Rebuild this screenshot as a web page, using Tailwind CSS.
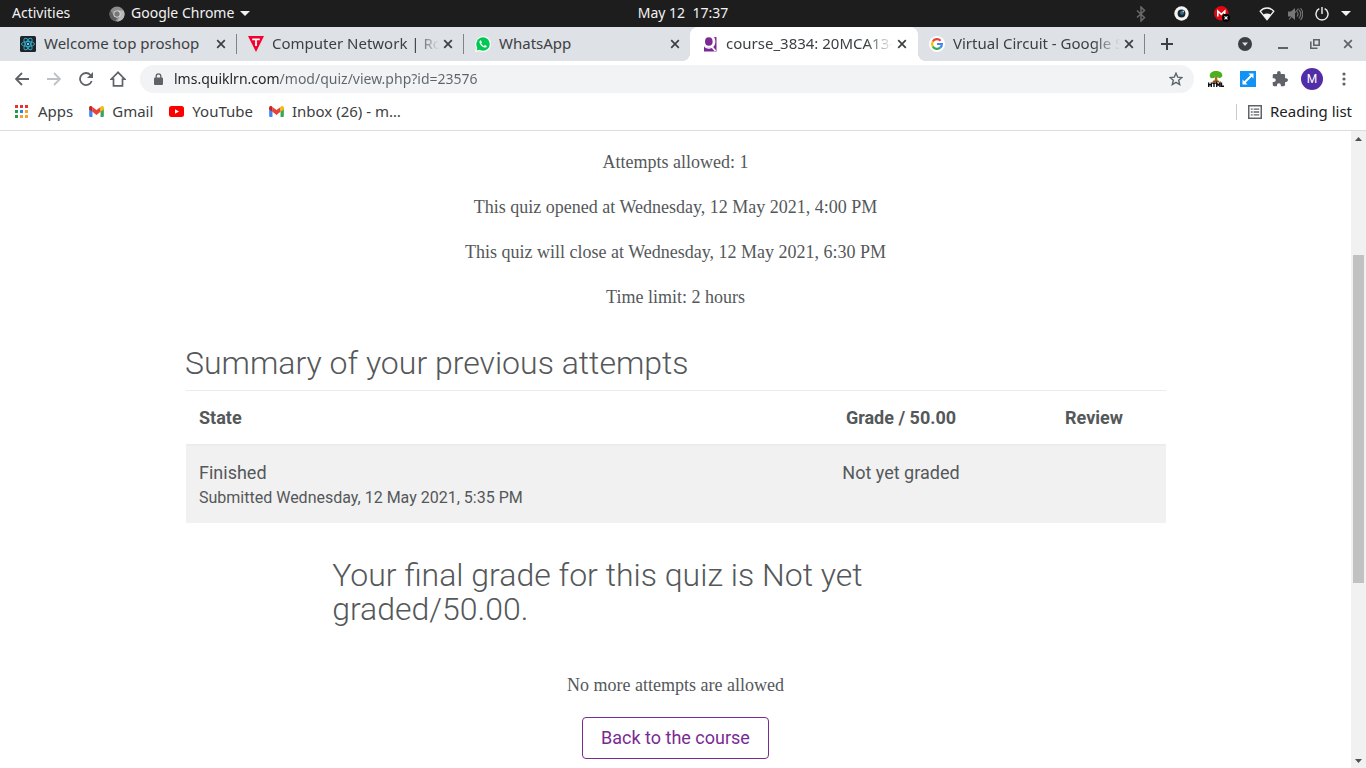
<!DOCTYPE html>
<html lang="en">
<head>
<meta charset="utf-8">
<meta name="viewport" content="width=device-width, initial-scale=1">
<title>course_3834: 20MCA13</title>
<script src="https://cdn.jsdelivr.net/npm/@tailwindcss/browser@4"></script>
</head>
<body class="flex h-screen flex-col overflow-hidden bg-white font-['Noto_Sans',sans-serif] text-[14px] text-[#3c4043]">

<svg class="hidden" aria-hidden="true">
  <symbol id="close" viewBox="0 0 10 10"><path d="M1.2 1.2l7.6 7.6M8.800 1.2L1.200 8.800" stroke="currentColor" stroke-width="1.7" fill="none"/></symbol>
  <symbol id="gmail" viewBox="0 0 16 12"><path d="M0 1.500V11a1 1 0 0 0 1 1h2.600V5z" fill="#4285f4"/><path d="M16 1.500V11a1 1 0 0 1-1 1h-2.600V5z" fill="#34a853"/><path d="M3.600 1v5.400L8 9.700l4.400-3.300V1L8 4.300z" fill="#ea4335"/><path d="M0 1.800v1.900l3.600 2.700V1L2.600.3C1.300-.5 0 .3 0 1.800z" fill="#c5221f"/><path d="M16 1.800v1.900l-3.600 2.700V1l1-.7c1.300-.8 2.600 0 2.600 1.500z" fill="#fbbc04"/></symbol>
</svg>

<!-- Desktop panel -->
<header class="grid h-[27px] shrink-0 grid-cols-[1fr_auto_1fr] items-center bg-[#1d1d1d] text-[#f2f2f2]">
  <div class="flex items-center pl-3">
    <button type="button" class="w-[97px] pb-0.5 text-left">Activities</button>
    <button type="button" class="flex items-center gap-1.5">
      <svg class="size-4" viewBox="0 0 16 16"><circle cx="8" cy="8" r="7.500" fill="#8c8c8c"/><path d="M8 4.500h6.700A7.500 7.500 0 0 1 8 15.500l3.200-5.700z" fill="#b9b9b9"/><path d="M1.500 4.200L5 10l3 2-1.800 3.300A7.500 7.500 0 0 1 1.500 4.200z" fill="#5e5e5e"/><circle cx="8" cy="8" r="3.600" fill="#ddd"/><circle cx="8" cy="8" r="2.700" fill="#777"/></svg>
      <span class="pb-0.5">Google Chrome</span>
      <svg class="h-[5px] w-[10px]" viewBox="0 0 10 5"><path d="M0 0h10L5 5z" fill="#f2f2f2"/></svg>
    </button>
  </div>
  <button type="button" class="pb-0.5 whitespace-pre">May 12  17:37</button>
  <div class="flex items-center justify-end pr-[15px]">
    <svg class="mr-[28px] h-4 w-[10px]" viewBox="0 0 10 16"><path d="M1 4.500l7.500 7L5 15V1l3.500 3.500-7.500 7" fill="none" stroke="#6a6a6a" stroke-width="1.500"/></svg>
    <svg class="mr-[25px] size-[15px]" viewBox="0 0 15 15"><circle cx="7.500" cy="7.500" r="7.200" fill="#f4f4f4"/><circle cx="7.500" cy="7.500" r="3.900" fill="#1c2227"/><circle cx="8" cy="6.800" r="2" fill="#2f6d99"/><circle cx="9.300" cy="5.300" r=".9" fill="#9fd0f0"/></svg>
    <svg class="mr-[29px] size-4" viewBox="0 0 16 16"><circle cx="7.300" cy="7.300" r="7.200" fill="#e30613"/><path d="M3.800 10.500V5L7.300 8.300 10.800 5V8" fill="none" stroke="#fff" stroke-width="1.600"/><circle cx="12" cy="11.800" r="4" fill="#000"/><path d="M10.500 10.300l3 3m0-3l-3 3" stroke="#fff" stroke-width="1.100"/></svg>
    <svg class="mr-[13px] h-[14px] w-4" viewBox="0 0 16 14"><path d="M1.200 4.200C5-.1 11-.1 14.800 4.200L8 12.800z" fill="none" stroke="#f2f2f2" stroke-width="1.300"/><path d="M4 7.800c2.500-1.600 5.500-1.600 8 0l-4 5z" fill="#f2f2f2"/></svg>
    <svg class="mr-[12px] h-[14px] w-[15px]" viewBox="0 0 15 14"><path d="M0 4.500h3L7 1v12L3 9.500H0z" fill="#777"/><path d="M9 4.500c1.300 1.500 1.300 3.500 0 5M10.800 2.700c2.300 2.500 2.300 6 0 8.600M12.500 1c3 3.500 3 8.500 0 12M1 12.500L10.500 1.500" fill="none" stroke="#777" stroke-width="1.100"/></svg>
    <svg class="mr-[12px] size-[14px]" viewBox="0 0 14 14"><path d="M4.300 1.700a6 6 0 1 0 5.400 0M7 0v7" fill="none" stroke="#f2f2f2" stroke-width="1.400"/></svg>
    <svg class="h-[5px] w-[10px]" viewBox="0 0 10 5"><path d="M0 0h10L5 5z" fill="#f2f2f2"/></svg>
  </div>
</header>

<!-- Tab strip -->
<nav aria-label="Tabs" class="flex h-[34px] shrink-0 items-stretch bg-[#dee1e6] text-[15px]">
  <div class="flex w-[237px] min-w-0 items-center pl-5">
    <svg class="size-4 shrink-0" viewBox="0 0 16 16"><rect width="16" height="16" rx="1.500" fill="#20232a"/><g fill="none" stroke="#2fa9c4" stroke-width="1"><ellipse cx="8" cy="8" rx="6.500" ry="2.500"/><ellipse cx="8" cy="8" rx="6.500" ry="2.500" transform="rotate(60 8 8)"/><ellipse cx="8" cy="8" rx="6.500" ry="2.500" transform="rotate(120 8 8)"/></g><circle cx="8" cy="8" r="1.200" fill="#61dafb"/></svg>
    <a href="#" class="ml-2 flex-1 overflow-hidden pb-0.5 whitespace-nowrap">Welcome top proshop</a>
    <button type="button" aria-label="Close tab" class="ml-1 mr-[10px]"><svg class="size-[10px]"><use href="#close"/></svg></button>
    <span class="h-5 w-px shrink-0 bg-[#808387]"></span>
  </div>
  <div class="flex w-[227px] min-w-0 items-center pl-[11px]">
    <svg class="size-4 shrink-0" viewBox="0 0 16 16"><path d="M0 0h16L8 16z" fill="#f5002f"/><path d="M4.200 3.300h7.600M8 3.300V10" stroke="#fff" stroke-width="1.800" fill="none"/></svg>
    <a href="#" class="ml-2 flex-1 overflow-hidden pb-0.5 whitespace-nowrap mask-r-from-86% mask-r-to-100%">Computer Network | Rou</a>
    <button type="button" aria-label="Close tab" class="ml-1 mr-[10px]"><svg class="size-[10px]"><use href="#close"/></svg></button>
    <span class="h-5 w-px shrink-0 bg-[#808387]"></span>
  </div>
  <div class="flex w-[226px] min-w-0 items-center pl-[11px]">
    <svg class="size-4 shrink-0" viewBox="0 0 16 16"><path d="M0 16l1.200-4.200A7.900 7.900 0 1 1 4.200 14.900z" fill="#fff"/><circle cx="8" cy="8" r="6.800" fill="#00c853"/><path d="M1.600 14.500l1-3.500 2.500 2.600z" fill="#00c853"/><path d="M5.700 4.200c-.9.200-1.400 1.200-1.200 2.200.5 2.300 2.700 4.600 5.200 5.100 1.100.2 2-.4 2.100-1.500L9.900 9l-1 1C7.700 9.500 6.700 8.500 6.200 7.300l.8-.9z" fill="#fff"/></svg>
    <a href="#" class="ml-2 flex-1 overflow-hidden pb-0.5 whitespace-nowrap">WhatsApp</a>
    <button type="button" aria-label="Close tab" class="ml-1 mr-[10px]"><svg class="size-[10px]"><use href="#close"/></svg></button>
  </div>
  <div class="relative flex w-[228px] min-w-0 items-center rounded-t-lg bg-white pl-[13px] before:absolute before:bottom-0 before:-left-2 before:size-2 before:bg-[radial-gradient(circle_at_0_0,transparent_8px,white_8px)] after:absolute after:-right-2 after:bottom-0 after:size-2 after:bg-[radial-gradient(circle_at_100%_0,transparent_8px,white_8px)]">
    <svg class="h-4 w-[15px] shrink-0" viewBox="0 0 15 16"><path d="M1 9.800c1 1 2.500 2 5 2 4.500 0 6-3.500 5.200-8L10 1h3.500v14.500H1z" fill="#7b2a94"/><path d="M10.300.8c2.200 3.200 2 7.500-.6 9.900-2.200 1.900-5.700 1.700-8.200-.5" stroke="#fff" stroke-width="1.300" fill="none"/><path d="M9 11l3.500 4" stroke="#fff" stroke-width="1.800"/><ellipse cx="5.800" cy="5.500" rx="3.800" ry="4.300" fill="#7b2a94"/></svg>
    <a href="#" aria-current="page" class="ml-2 flex-1 overflow-hidden pb-0.5 whitespace-nowrap mask-r-from-84% mask-r-to-100%">course_3834: 20MCA13-</a>
    <button type="button" aria-label="Close tab" class="ml-1 mr-[11px]"><svg class="size-[10px]"><use href="#close"/></svg></button>
  </div>
  <div class="flex w-[227px] min-w-0 items-center pl-[11px]">
    <svg class="size-4 shrink-0" viewBox="0 0 16 16"><circle cx="8" cy="8" r="8" fill="#fff"/><g fill="none" stroke-width="2.200"><path d="M11.600 4.700A4.900 4.900 0 0 0 3.800 5.500" stroke="#ea4335"/><path d="M3.800 5.500a4.900 4.900 0 0 0 0 5" stroke="#fbbc05"/><path d="M3.800 10.500a4.900 4.900 0 0 0 7.400 1.200" stroke="#34a853"/><path d="M11.200 11.700A4.900 4.900 0 0 0 12.900 8H8" stroke="#4285f4"/></g></svg>
    <a href="#" class="ml-2 flex-1 overflow-hidden pb-0.5 whitespace-nowrap mask-r-from-84% mask-r-to-100%">Virtual Circuit - Google S</a>
    <button type="button" aria-label="Close tab" class="ml-1 mr-[10px]"><svg class="size-[10px]"><use href="#close"/></svg></button>
    <span class="h-5 w-px shrink-0 bg-[#808387]"></span>
  </div>
  <button type="button" aria-label="New tab" class="ml-4"><svg class="size-3" viewBox="0 0 12 12"><path d="M6 0v12M0 6h12" stroke="#3c4043" stroke-width="2"/></svg></button>
  <div class="ml-auto flex items-center pr-[13px] text-[#5f6368]">
    <button type="button" aria-label="Search tabs" class="mr-[26px]"><svg class="size-[14px]" viewBox="0 0 14 14"><circle cx="7" cy="7" r="7" fill="#3c4043"/><path d="M4 5.500h6L7 9z" fill="#dee1e6"/></svg></button>
    <button type="button" aria-label="Minimize" class="mr-[22px]"><svg class="size-[10px]" viewBox="0 0 10 10"><path d="M0 9h10" stroke="currentColor" stroke-width="2"/></svg></button>
    <button type="button" aria-label="Restore" class="mr-[23px]"><svg class="size-[10px]" viewBox="0 0 10 10"><path d="M3.800.8h5.400v5.400H3.800zM.8 2.500v6.700h6.700" fill="none" stroke="currentColor" stroke-width="1.600"/></svg></button>
    <button type="button" aria-label="Close window"><svg class="size-[10px]"><use href="#close"/></svg></button>
  </div>
</nav>

<!-- Toolbar -->
<div class="flex h-9 shrink-0 items-center px-1.5 text-[#5f6368]">
  <button type="button" aria-label="Back" class="grid size-8 place-items-center"><svg class="size-[14px]" viewBox="0 0 14 14"><path d="M14 7H1.500M7 1L1 7l6 6" fill="none" stroke="#5f6368" stroke-width="1.800"/></svg></button>
  <button type="button" aria-label="Forward" class="grid size-8 place-items-center"><svg class="size-[14px]" viewBox="0 0 14 14"><path d="M0 7h12.500M7 1l6 6-6 6" fill="none" stroke="#bdc1c6" stroke-width="1.800"/></svg></button>
  <button type="button" aria-label="Reload" class="grid size-8 place-items-center"><svg class="size-[14px]" viewBox="0 0 14 14"><path d="M12.700 9A6 6 0 1 1 11.500 3" fill="none" stroke="#5f6368" stroke-width="1.800"/><path d="M14 0v6H8z" fill="#5f6368"/></svg></button>
  <button type="button" aria-label="Home" class="grid size-8 place-items-center"><svg class="size-4" viewBox="0 0 16 16"><path d="M8 1.300L1.200 8.200H3.500v6.600h9V8.200h2.300z" fill="none" stroke="#5f6368" stroke-width="1.700"/></svg></button>
  <div class="mr-1.5 ml-1.5 flex h-7 flex-1 items-center rounded-full bg-[#f1f3f4] pl-3.5">
    <svg class="h-3 w-[9px]" viewBox="0 0 9 12"><path d="M2.200 5V3.200a2.300 2.300 0 0 1 4.600 0V5" fill="none" stroke="#5f6368" stroke-width="1.300"/><rect y="4.500" width="9" height="7.500" rx="1" fill="#5f6368"/></svg>
    <input type="text" aria-label="Address" value="lms.quiklrn.com/mod/quiz/view.php?id=23576" class="ml-[11px] min-w-0 flex-1 bg-[linear-gradient(to_right,#202124_105px,#5f6368_105px)] bg-clip-text pb-0.5 text-transparent outline-none">
    <button type="button" aria-label="Bookmark this page" class="mr-[11px]"><svg class="size-[14px]" viewBox="0 0 14 14"><path d="M7 1.200l1.700 3.900 4.200.4-3.200 2.800 1 4.200L7 10.300l-3.700 2.200 1-4.200L1.100 5.500l4.200-.4z" fill="none" stroke="#5f6368" stroke-width="1.400"/></svg></button>
  </div>
  <button type="button" aria-label="HTML tree extension" class="grid size-8 place-items-center"><svg class="size-4" viewBox="0 0 16 16"><path d="M7.300 5h1.600l.9 6H6.400z" fill="#b5651d"/><path d="M5 .6C6.500-.4 9.500-.4 11 .6c2.500.5 3.700 2.800 3.200 4.600-.8 1.900-3.200 2-4.700 1.400L8 5 6.500 6.800C5 7.600 2.300 7.400 1.800 5.400 1.400 3.600 2.700 1.300 5 .6z" fill="#4caf1c"/><path d="M5.500 9.500L4 11.500h8l-1.500-2z" fill="#8a4b12"/><path d="M.7 11.500V16M3.300 11.500V16M.7 13.700h2.600M4.300 12.200h3.400M6 12v4M8.700 16v-3.900l1.600 2 1.600-2V16M13.500 11.500v3.800H16" fill="none" stroke="#111" stroke-width="1.400"/></svg></button>
  <button type="button" aria-label="Resize extension" class="grid size-8 place-items-center"><svg class="size-4" viewBox="0 0 16 16"><rect width="16" height="16" fill="#1292f4"/><path d="M8.500 2.500h5v5zM2.500 8.500v5h5z" fill="#fff"/><path d="M4 12l8-8" stroke="#fff" stroke-width="2"/></svg></button>
  <button type="button" aria-label="Extensions" class="grid size-8 place-items-center"><svg class="size-4" viewBox="1 1 22 22"><path d="M20.500 11H19V7a2 2 0 0 0-2-2h-4V3.500a2.500 2.500 0 0 0-5 0V5H4a2 2 0 0 0-2 2v3.800h1.500a2.700 2.700 0 0 1 0 5.400H2V20a2 2 0 0 0 2 2h3.800v-1.500a2.700 2.700 0 0 1 5.400 0V22H17a2 2 0 0 0 2-2v-4h1.500a2.500 2.500 0 0 0 0-5z" fill="#5f6368"/></svg></button>
  <button type="button" aria-label="Profile" class="grid size-8 place-items-center"><span class="grid size-[22px] place-items-center rounded-full bg-[#512da8] font-['Roboto',sans-serif] text-[12px] text-white">M</span></button>
  <button type="button" aria-label="Menu" class="grid size-8 place-items-center"><svg class="h-[14px] w-1" viewBox="0 0 4 14"><g fill="#5f6368"><circle cx="2" cy="2" r="1.600"/><circle cx="2" cy="7" r="1.600"/><circle cx="2" cy="12" r="1.600"/></g></svg></button>
</div>

<!-- Bookmarks bar -->
<nav aria-label="Bookmarks" class="flex h-[34px] shrink-0 items-center gap-4 border-b border-[#dadce0] pr-3.5 pb-1 pl-[15px] text-[15px]">
  <a href="#" class="flex items-center gap-2.5"><svg class="size-[13px]" viewBox="0 0 13 13"><path d="M0 0h3v3H0zM5 0h3v3H5zM10 0h3v3h-3z" fill="#ea2f38"/><path d="M0 5h3v3H0zM0 10h3v3H0z" fill="#1e9e4a"/><path d="M5 5h3v3H5z" fill="#1a8cf0"/><path d="M10 5h3v3h-3zM5 10h3v3H5zM10 10h3v3h-3z" fill="#fba02c"/></svg>Apps</a>
  <a href="#" class="flex items-center gap-2"><svg class="h-[11px] w-[15px]"><use href="#gmail"/></svg>Gmail</a>
  <a href="#" class="flex items-center gap-2"><svg class="h-[11px] w-[15px]" viewBox="0 0 15 11"><rect width="15" height="11" rx="2.500" fill="#f00"/><path d="M6 3.200v4.600l4-2.300z" fill="#fff"/></svg>YouTube</a>
  <a href="#" class="flex items-center gap-2"><svg class="h-[11px] w-[15px]"><use href="#gmail"/></svg>Inbox (26) - m…</a>
  <div class="ml-auto flex items-center">
    <span class="mr-[11px] h-4 w-px bg-[#c8cacd]"></span>
    <button type="button" class="flex items-center gap-2 text-[#202124]"><svg class="size-[14px]" viewBox="0 0 15 15"><rect x=".8" y=".8" width="13.400" height="13.400" fill="none" stroke="#5f6368" stroke-width="1.600"/><path d="M3 4.500h2M6 4.500h6M3 7.500h2M6 7.500h6M3 10.500h2M6 10.500h6" stroke="#5f6368" stroke-width="1.400"/></svg>Reading list</button>
  </div>
</nav>

<!-- Page viewport -->
<div class="flex min-h-0 flex-1">
  <main class="min-w-0 flex-1 overflow-hidden pt-[18px] font-['Roboto',sans-serif] text-[18px] leading-[27px] text-[#54585a]">
    <div class="mx-auto max-w-[981px]">
      <div class="flex flex-col gap-[18px] text-center font-['Liberation_Serif',serif]">
        <p>Attempts allowed: 1</p>
        <p>This quiz opened at Wednesday, 12 May 2021, 4:00 PM</p>
        <p>This quiz will close at Wednesday, 12 May 2021, 6:30 PM</p>
        <p>Time limit: 2 hours</p>
      </div>
      <h3 class="mt-[35px] mb-[10px] text-[32px] leading-[34px] font-light">Summary of your previous attempts</h3>
      <div class="pl-px">
        <table class="w-full table-fixed border-collapse">
          <thead>
            <tr class="border-t border-[#ececec]">
              <th scope="col" class="p-[13px] text-left">State</th>
              <th scope="col" class="w-[242px] p-[13px] text-center">Grade / 50.00</th>
              <th scope="col" class="w-[144px] p-[13px] text-center">Review</th>
            </tr>
          </thead>
          <tbody>
            <tr class="border-t-2 border-[#ececec] bg-[#f1f1f1] align-top">
              <td class="p-[13px]">Finished<span class="block text-[16px] leading-[24px]">Submitted Wednesday, 12 May 2021, 5:35 PM</span></td>
              <td class="p-[13px] text-center">Not yet graded</td>
              <td class="p-[13px]"></td>
            </tr>
          </tbody>
        </table>
      </div>
      <section class="mx-auto mt-[35px] w-[70%]">
        <h3 class="text-[32px] leading-[34px] font-light">Your final grade for this quiz is Not yet graded/50.00.</h3>
      </section>
      <div class="mt-[46px] flex flex-col items-center gap-[18px]">
        <p class="font-['Liberation_Serif',serif]">No more attempts are allowed</p>
        <button type="button" class="rounded border border-[#7b2a94] px-[18px] py-[6px] leading-[28px] text-[#7b2a94]">Back to the course</button>
      </div>
    </div>
  </main>
  <div class="flex w-[15px] shrink-0 flex-col items-center bg-[#f1f1f1]">
    <button type="button" aria-label="Scroll up" class="grid h-[15px] w-full place-items-center"><svg class="h-1 w-[7px]" viewBox="0 0 7 4"><path d="M0 4h7L3.500 0z" fill="#505050"/></svg></button>
    <span class="grow-109"></span>
    <span class="w-[11px] grow-328 bg-[#c1c1c1]"></span>
    <span class="grow-170"></span>
    <button type="button" aria-label="Scroll down" class="grid h-[15px] w-full place-items-center"><svg class="h-1 w-[7px]" viewBox="0 0 7 4"><path d="M0 0h7L3.500 4z" fill="#505050"/></svg></button>
  </div>
</div>
</body>
</html>
